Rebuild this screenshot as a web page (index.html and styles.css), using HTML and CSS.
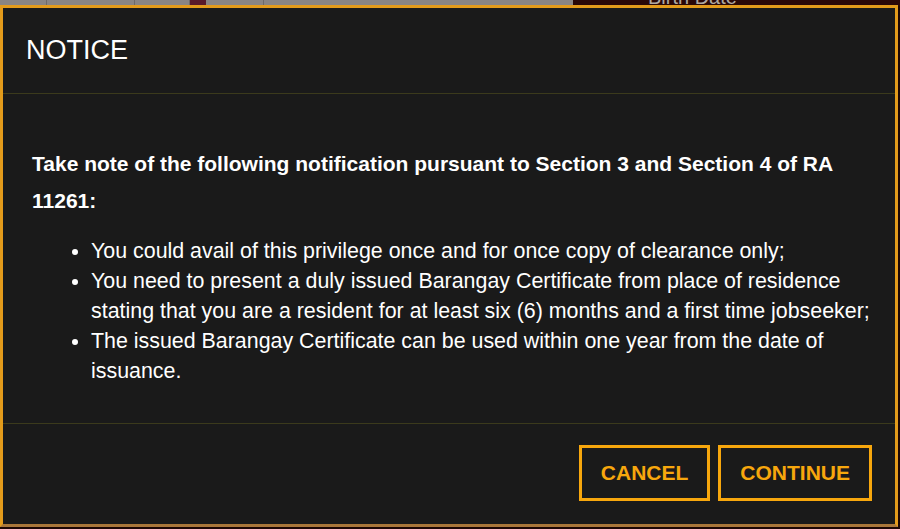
FILE: index.html
```html
<!DOCTYPE html>
<html lang="en">
<head>
    <meta charset="UTF-8">
    <meta name="viewport" content="width=device-width, initial-scale=1.0">
    <title>Notice</title>
    <link rel="stylesheet" href="styles.css">
</head>
<body>

<div class="page">
    <div class="page-left">
        <div class="cell c1"></div>
        <div class="cell c2"></div>
        <div class="cell c3"></div>
        <div class="cell accent"></div>
        <div class="cell c4"></div>
    </div>
    <div class="page-right">
        <span class="field-label">Birth Date</span>
    </div>
</div>

<div class="modal">
    <div class="modal-header">
        <h2>NOTICE</h2>
    </div>
    <div class="modal-body">
        <p>Take note of the following notification pursuant to Section 3 and Section 4 of RA 11261:</p>
        <ul>
            <li>You could avail of this privilege once and for once copy of clearance only;</li>
            <li>You need to present a duly issued Barangay Certificate from place of residence stating that you are a resident for at least six (6) months and a first time jobseeker;</li>
            <li>The issued Barangay Certificate can be used within one year from the date of issuance.</li>
        </ul>
    </div>
    <div class="modal-footer">
        <button class="btn">CANCEL</button>
        <button class="btn">CONTINUE</button>
    </div>
</div>

</body>
</html>
```

FILE: styles.css
```css
body {
    font-family: Arial, "Liberation Sans", sans-serif;
    background-color: #1c0604;
    margin: 0;
    height: 529px;
    overflow: hidden;
}
.page {
    display: flex;
    height: 529px;
}
.page-left {
    width: 573px;
    height: 6px;
    display: flex;
    background-color: #8a8583;
}
.cell {
    border-right: 1px solid #6f6a68;
}
.c1 { width: 46px; }
.c2 { width: 87px; }
.c3 { width: 54px; }
.c4 { width: 57px; }
.cell.accent {
    width: 16px;
    border-right: none;
    background-color: #5a1a2a;
}
.page-right {
    flex: 1;
    height: 6px;
    background-color: #2a0808;
    overflow: hidden;
    position: relative;
}
.field-label {
    position: absolute;
    left: 75px;
    top: -14px;
    color: #b0a8a0;
    font-size: 20px;
}
.modal {
    position: fixed;
    top: 5px;
    left: 0;
    width: 892px;
    height: 516px;
    background-color: #1a1a1a;
    border: 3px solid #e39b1b;
    border-bottom-color: #a9773a;
    display: flex;
    flex-direction: column;
}
.modal-header {
    height: 85px;
    padding-left: 23px;
    display: flex;
    align-items: center;
    border-bottom: 1px solid #3b3a1c;
}
.modal-header h2 {
    margin: 0;
    color: #fff;
    font-size: 27px;
    font-weight: normal;
}
.modal-body {
    flex: 1;
    padding: 51px 8px 0 29px;
    color: #fff;
}
.modal-body p {
    margin: 0 0 17px;
    font-size: 21px;
    font-weight: bold;
    line-height: 37px;
}
.modal-body ul {
    margin: 0;
    padding-left: 59px;
    font-size: 21.4px;
    line-height: 30px;
}
.modal-footer {
    height: 101px;
    border-top: 1px solid #3b3a1c;
    display: flex;
    justify-content: flex-end;
    align-items: flex-start;
    gap: 8px;
    padding: 21px 23px 0 0;
    box-sizing: border-box;
}
.btn {
    height: 56px;
    padding: 0 19px;
    background-color: transparent;
    border: 3px solid #f7a70d;
    color: #f7a70d;
    font-family: Arial, "Liberation Sans", sans-serif;
    font-size: 21px;
    font-weight: bold;
    cursor: pointer;
}
```
